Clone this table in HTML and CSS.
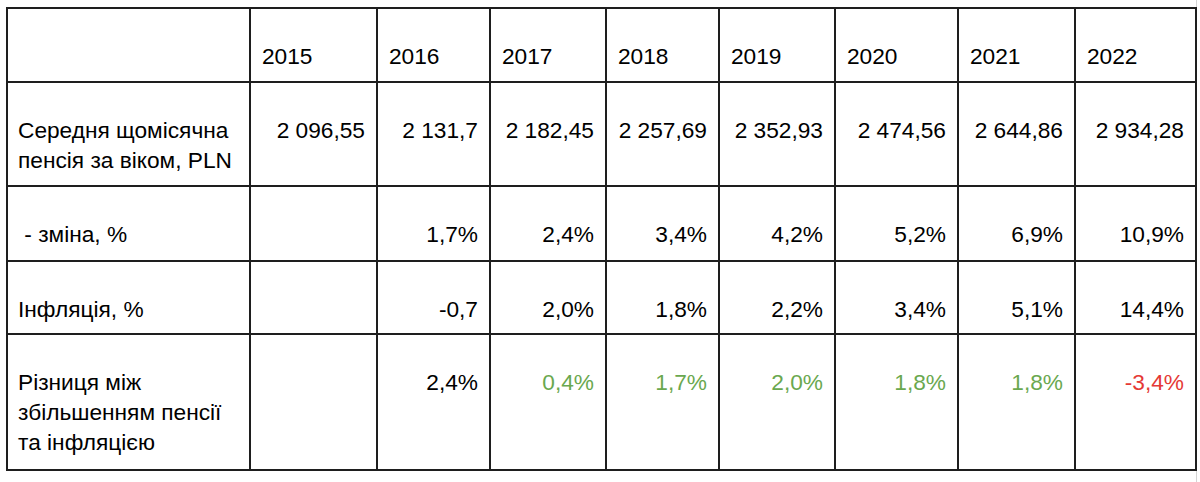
FILE: index.html
```html
<!DOCTYPE html>
<html lang="uk">
<head>
<meta charset="utf-8">
<link rel="stylesheet" href="styles.css">
</head>
<body>
<div class="frame">
<table class="data">
  <colgroup>
    <col class="c-label">
    <col class="c-2015">
    <col class="c-2016">
    <col class="c-2017">
    <col class="c-2018">
    <col class="c-2019">
    <col class="c-2020">
    <col class="c-2021">
    <col class="c-2022">
  </colgroup>
  <tr class="r-head">
    <td></td>
    <td class="year">2015</td>
    <td class="year">2016</td>
    <td class="year">2017</td>
    <td class="year">2018</td>
    <td class="year">2019</td>
    <td class="year">2020</td>
    <td class="year">2021</td>
    <td class="year">2022</td>
  </tr>
  <tr class="r-pension">
    <td class="label">Середня щомісячна пенсія за віком, PLN</td>
    <td class="num">2&nbsp;096,55</td>
    <td class="num">2&nbsp;131,7</td>
    <td class="num">2&nbsp;182,45</td>
    <td class="num">2&nbsp;257,69</td>
    <td class="num">2&nbsp;352,93</td>
    <td class="num">2&nbsp;474,56</td>
    <td class="num">2&nbsp;644,86</td>
    <td class="num">2&nbsp;934,28</td>
  </tr>
  <tr class="r-change">
    <td class="label">&nbsp;- зміна, %</td>
    <td class="num"></td>
    <td class="num">1,7%</td>
    <td class="num">2,4%</td>
    <td class="num">3,4%</td>
    <td class="num">4,2%</td>
    <td class="num">5,2%</td>
    <td class="num">6,9%</td>
    <td class="num">10,9%</td>
  </tr>
  <tr class="r-infl">
    <td class="label">Інфляція, %</td>
    <td class="num"></td>
    <td class="num">-0,7</td>
    <td class="num">2,0%</td>
    <td class="num">1,8%</td>
    <td class="num">2,2%</td>
    <td class="num">3,4%</td>
    <td class="num">5,1%</td>
    <td class="num">14,4%</td>
  </tr>
  <tr class="r-diff">
    <td class="label">Різниця між збільшенням пенсії та інфляцією</td>
    <td class="num"></td>
    <td class="num">2,4%</td>
    <td class="num pos">0,4%</td>
    <td class="num pos">1,7%</td>
    <td class="num pos">2,0%</td>
    <td class="num pos">1,8%</td>
    <td class="num pos">1,8%</td>
    <td class="num neg">-3,4%</td>
  </tr>
</table>
</div>
</body>
</html>
```

FILE: styles.css
```css
html, body {
  margin: 0;
  padding: 0;
  background: #ffffff;
}

body {
  font-family: "Liberation Sans", Arial, sans-serif;
  color: #000000;
}

.frame {
  width: 1197px;
  height: 482px;
  border-right: 1px solid #d4d4d4;
  padding: 7px 0 0 6px;
  box-sizing: border-box;
}

.data {
  border-collapse: collapse;
  table-layout: fixed;
  width: 1189px;
  font-size: 22.7px;
  line-height: 30px;
}

.c-label { width: 243px; }
.c-2015 { width: 127px; }
.c-2016 { width: 113px; }
.c-2017 { width: 116px; }
.c-2018 { width: 113px; }
.c-2019 { width: 116px; }
.c-2020 { width: 123px; }
.c-2021 { width: 117px; }
.c-2022 { width: 121px; }

.data td {
  border: 2px solid #1e1e1e;
  vertical-align: top;
  padding: 32px 12px 0 10px;
  white-space: nowrap;
}

.data td.label {
  white-space: normal;
}

.data td.year {
  padding-left: 11px;
}

.data td.num {
  text-align: right;
  padding-right: 11px;
}

.r-head { height: 74px; }
.r-pension { height: 104px; }
.r-change { height: 75px; }
.r-infl { height: 73px; }
.r-diff { height: 136px; }

.pos { color: #6aa84f; }
.neg { color: #e53935; }
```
